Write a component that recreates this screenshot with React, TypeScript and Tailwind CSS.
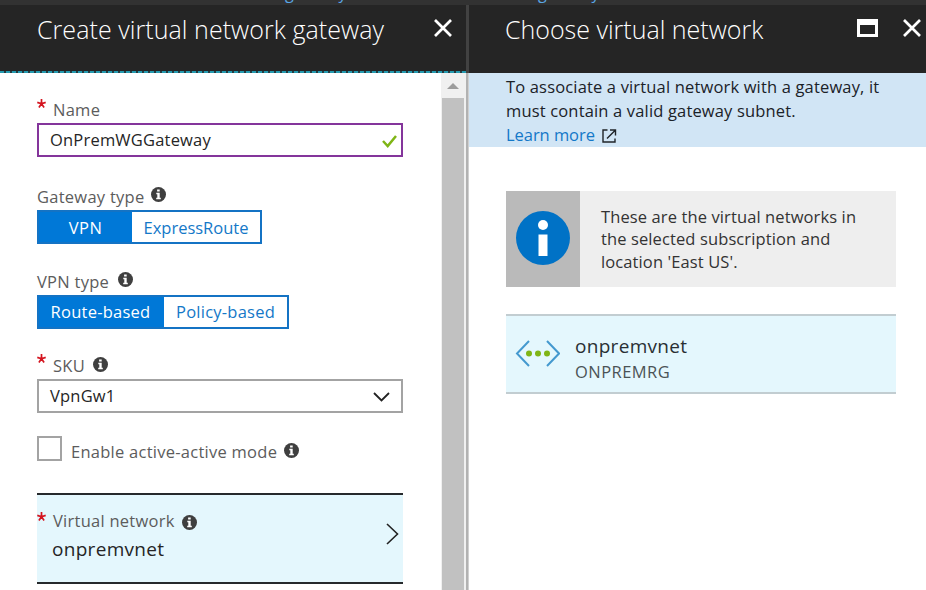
import type { ReactNode } from "react";

function InfoIcon({ className = "" }: { className?: string }) {
  return (
    <svg className={`shrink-0 ${className}`} width="15" height="15" viewBox="0 0 15 15">
      <circle cx="7.5" cy="7.5" r="7.5" fill="#3f3f3f" />
      <path d="M6.1 2.5h2.6v2H6.1zM5.3 5.8h3.4v5h1.1v1.4H5.2v-1.4h1.1V7.2h-1z" fill="#fff" />
    </svg>
  );
}

function Star({ className = "" }: { className?: string }) {
  return (
    <svg className={`shrink-0 ${className}`} width="9" height="9" viewBox="0 0 9 9">
      <path d="M4.5 4.8V0M4.5 4.8L.3 3.4M4.5 4.8l4.2-1.4M4.5 4.8L1.9 8.4M4.5 4.8l2.6 3.6" stroke="#d4141f" strokeWidth="1.7" fill="none" />
    </svg>
  );
}

function CloseIcon() {
  return (
    <svg className="shrink-0" width="18" height="18" viewBox="0 0 18 18">
      <path d="M1 1l16 16M17 1L1 17" stroke="#fff" strokeWidth="2.7" />
    </svg>
  );
}

function Label({ children }: { children: ReactNode }) {
  return <span className="text-[16.5px] leading-[25px] tracking-[0.26px] whitespace-nowrap text-[#5c5c5c]">{children}</span>;
}

export default function App() {
  return (
    <div className="flex h-[590px] w-[926px] flex-col overflow-hidden bg-white font-['Open_Sans','Noto_Sans',sans-serif]">
      <div className="flex h-[5px] shrink-0 overflow-hidden bg-[#323232] text-base leading-5 text-[#5aa7e6]">
        <span className="-mt-[17px] ml-[285px] w-[253px] shrink-0">gateway</span>
        <span className="-mt-[17px]">gateway</span>
      </div>
      <div className="flex min-h-0 flex-1">
        <section className="flex w-[466px] flex-col">
          <header className="flex h-[68px] shrink-0 justify-between bg-[#252525] pr-[14px] pl-[37px]">
            <h1 className="mt-[6px] text-[25px] leading-9 font-light tracking-[0.06px] whitespace-nowrap text-white">Create virtual network gateway</h1>
            <div className="mt-[14px]"><CloseIcon /></div>
          </header>
          <div className="-mt-[2px] h-[2px] shrink-0 bg-[repeating-linear-gradient(90deg,#259ab0_0_4px,#253c42_4px_6px)]" />
          <div className="flex min-h-0 flex-1 justify-between">
            <div className="flex w-[403px] flex-col pl-[37px]">
              <div className="mt-[24px] flex h-[26px]">
                <Star className="mt-[2px] mr-[7px]" />
                <Label>Name</Label>
              </div>
              <div className="flex h-[34px] items-center justify-between border-2 border-[#84359b] pr-1 pl-[11px]">
                <span className="text-[16.5px] leading-6 tracking-[0.2px] text-[#252525]">OnPremWGGateway</span>
                <svg className="mt-[2px]" width="15" height="13" viewBox="0 0 15 13"><path d="M1 6l4.7 5L14 1" fill="none" stroke="#7fb516" strokeWidth="2.5" /></svg>
              </div>
              <div className="mt-[27px] flex h-[26px] gap-[7px]">
                <Label>Gateway type</Label>
                <InfoIcon className="mt-[3px]" />
              </div>
              <div className="flex h-[34px] w-[225px] border-2 border-[#1473c4] text-[16.5px] leading-[31px]">
                <span className="w-[93px] bg-[#0078d7] text-center tracking-[0.5px] text-white">VPN</span>
                <span className="flex-1 text-center text-[#1478c8]">ExpressRoute</span>
              </div>
              <div className="mt-[25px] flex h-[26px] gap-[7px]">
                <Label>VPN type</Label>
                <InfoIcon className="mt-[3px] ml-[2px]" />
              </div>
              <div className="flex h-[34px] w-[252px] border-2 border-[#1473c4] text-[16.5px] leading-[30px] tracking-[0.24px]">
                <span className="w-[125px] bg-[#0078d7] pr-[2px] text-center text-white">Route-based</span>
                <span className="flex-1 text-center text-[#1478c8]">Policy-based</span>
              </div>
              <div className="mt-[24px] flex h-[26px]">
                <Star className="mt-[1px] mr-[7px]" />
                <Label>SKU</Label>
                <InfoIcon className="mt-[4px] ml-[8px]" />
              </div>
              <div className="flex h-[34px] items-center justify-between border-2 border-[#a3a3a3] pr-[11px] pl-[11px]">
                <span className="text-[16.5px] leading-6 tracking-[0.2px] text-[#252525]">VpnGw1</span>
                <svg className="mt-[2px]" width="17" height="10" viewBox="0 0 17 10"><path d="M1 1l7.5 7.5L16 1" fill="none" stroke="#222" strokeWidth="1.8" /></svg>
              </div>
              <div className="mt-[23px] flex h-[25px]">
                <span className="mr-[9px] h-[25px] w-[25px] shrink-0 border-2 border-[#a3a3a3]" />
                <span className="mt-[3px]"><Label>Enable active-active mode</Label></span>
                <InfoIcon className="mt-[7px] ml-[7px]" />
              </div>
              <div className="mt-[32px] flex h-[91px] items-center justify-between border-y-2 border-[#26292c] bg-[#e4f7fd] pr-1">
                <div className="flex h-full flex-col pt-[13px]">
                  <div className="flex h-[26px]">
                    <Star className="mt-[4px] mr-[7px]" />
                    <Label>Virtual network</Label>
                    <InfoIcon className="mt-[7px] ml-[7px]" />
                  </div>
                  <span className="mt-[1px] ml-[15px] text-[19px] leading-7 tracking-[0.3px] text-[#252525]">onpremvnet</span>
                </div>
                <svg className="-mt-[9px]" width="13" height="22" viewBox="0 0 13 22"><path d="M1 1l10.5 10L1 21" fill="none" stroke="#222" strokeWidth="1.6" /></svg>
              </div>
            </div>
            <div className="flex w-[25px] flex-col bg-[#f0f0f0]">
              <svg className="h-[25px] w-[25px] shrink-0" viewBox="0 0 25 25"><path d="M6 16l6-6 6 6z" fill="#9c9c9c" /></svg>
              <div className="ml-px w-[22px] flex-1 bg-[#c1c1c1]" />
            </div>
          </div>
        </section>
        <div className="flex w-[3px] flex-col">
          <div className="h-[68px] bg-[#424242]" />
          <div className="flex-1 border-r border-[#d0d0d0] bg-[#b2b2b2]" />
        </div>
        <section className="flex flex-1 flex-col">
          <header className="flex h-[68px] shrink-0 justify-between bg-[#252525] pr-[5px] pl-[36px]">
            <h1 className="mt-[6px] text-[25px] leading-9 font-light whitespace-nowrap text-white">Choose virtual network</h1>
            <div className="mt-[14px] flex gap-[25px]">
              <span className="h-[18px] w-[21px] border-3 border-t-6 border-white" />
              <CloseIcon />
            </div>
          </header>
          <div className="flex h-[74px] shrink-0 flex-col bg-[#d1e5f5] pt-[2px] pl-[37px] text-[16.5px] leading-6 tracking-[0.16px] whitespace-nowrap text-[#1b2228]">
            <span>To associate a virtual network with a gateway, it</span>
            <span>must contain a valid gateway subnet.</span>
            <div className="flex items-center gap-[7px] tracking-[-0.05px] text-[#1478c8]">
              <span>Learn more</span>
              <svg className="mt-px" width="15" height="14" viewBox="0 0 15 14" fill="none" stroke="#202428" strokeWidth="1.4"><path d="M5.5 1H1v12h12V9.5M8 1h5.5v5.5M13.3 1.2L5 9.5" /></svg>
            </div>
          </div>
          <div className="mt-[44px] ml-[37px] flex h-[96px] w-[390px] shrink-0 bg-[#eee]">
            <div className="flex w-[74px] items-center justify-center bg-[#bababa]">
              <svg className="-mt-[2px]" width="54" height="54" viewBox="0 0 54 54"><circle cx="27" cy="27" r="27" fill="#0072c6" /><circle cx="27" cy="14" r="5" fill="#fff" /><path d="M22.5 23.5h9V45h-9z" fill="#fff" /></svg>
            </div>
            <p className="pt-[15px] pl-[21px] text-[16.5px] leading-[22.3px] tracking-[0.11px] whitespace-nowrap text-[#333]">
              These are the virtual networks in<br />the selected subscription and<br />location 'East US'.
            </p>
          </div>
          <div className="mt-[27px] ml-[37px] flex h-[80px] w-[390px] shrink-0 border-y-2 border-[#c2cdd1] bg-[#e4f7fd] pl-[9px]">
            <svg className="mt-[24px] mr-[15px]" width="45" height="27" viewBox="0 0 45 27"><path d="M14 1L2 13.5 14 26M32 1l12 12.5L32 26" fill="none" stroke="#4499cf" strokeWidth="2" /><g fill="#7fb516"><circle cx="14" cy="13.5" r="3" /><circle cx="23" cy="13.5" r="3" /><circle cx="32" cy="13.5" r="3" /></g></svg>
            <div className="flex flex-col pt-[16px]">
              <span className="text-[19px] leading-7 tracking-[0.3px] text-[#292f33]">onpremvnet</span>
              <span className="text-[16.5px] leading-6 tracking-[0.45px] text-[#4b5356]">ONPREMRG</span>
            </div>
          </div>
        </section>
      </div>
    </div>
  );
}
